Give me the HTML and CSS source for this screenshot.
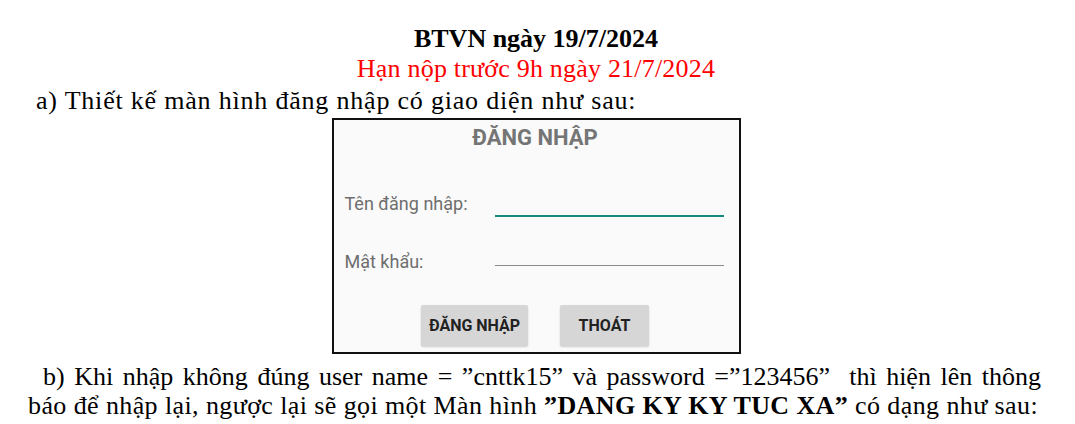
FILE: index.html
```html
<!DOCTYPE html>
<html lang="vi">
<head>
<meta charset="utf-8">
<title>BTVN</title>
<link rel="stylesheet" href="styles.css">
</head>
<body>
<div class="page">
  <div class="title">BTVN ngày 19/7/2024</div>
  <div class="deadline">Hạn nộp trước 9h ngày 21/7/2024</div>
  <div class="line-a">a) Thiết kế màn hình đăng nhập có giao diện như sau:</div>
  <div class="screen">
    <div class="screen-title">ĐĂNG NHẬP</div>
    <div class="row row-user">
      <div class="label">Tên đăng nhập:</div>
      <div class="field field-active"></div>
    </div>
    <div class="row row-pass">
      <div class="label">Mật khẩu:</div>
      <div class="field field-idle"></div>
    </div>
    <div class="buttons">
      <div class="btn btn-login">ĐĂNG NHẬP</div>
      <div class="btn btn-exit">THOÁT</div>
    </div>
  </div>
  <div class="line-b1">b) Khi nhập không đúng user name = ”cnttk15” và password =”123456”&nbsp; thì hiện lên thông</div>
  <div class="line-b2">báo để nhập lại, ngược lại sẽ gọi một Màn hình <b>”DANG KY KY TUC XA”</b> có dạng như sau:</div>
</div>
</body>
</html>
```
FILE: styles.css
```css
html, body {
  margin: 0;
  padding: 0;
  background: #ffffff;
}
.page {
  font-family: "Liberation Serif", "Times New Roman", serif;
  font-size: 26px;
  line-height: 30px;
  color: #000;
  padding: 24px 34px 0 28px;
  display: flex;
  flex-direction: column;
}
.title {
  text-align: center;
  font-weight: bold;
  margin-left: 3px;
}
.deadline {
  text-align: center;
  color: #ff0000;
  margin-left: 3px;
  letter-spacing: 0.2px;
}
.line-a {
  margin-top: 2px;
  padding-left: 8px;
  letter-spacing: 0.8px;
}
.screen {
  align-self: center;
  margin-left: 3px;
  margin-top: 2px;
  width: 409px;
  height: 236px;
  box-sizing: border-box;
  border: 2px solid #111;
  background: #fafafa;
  font-family: Roboto, "Noto Sans", sans-serif;
  line-height: normal;
  display: flex;
  flex-direction: column;
  padding: 5px 15px 0 11px;
}
.screen-title {
  text-align: center;
  font-size: 22px;
  line-height: 26px;
  font-weight: bold;
  color: #757575;
  margin-left: 2px;
}
.row {
  display: flex;
  align-items: flex-start;
}
.row-user {
  margin-top: 42px;
}
.row-pass {
  margin-top: 34px;
}
.label {
  width: 150px;
  font-size: 18px;
  line-height: 21px;
  color: #6e6e6e;
}
.field {
  flex: 1;
}
.field-active {
  height: 22px;
  border-bottom: 2px solid #16897c;
}
.field-idle {
  height: 14px;
  border-bottom: 1px solid #8c8c8c;
}
.buttons {
  margin-top: 33px;
  display: flex;
  justify-content: center;
  gap: 32px;
  margin-left: 2px;
}
.btn {
  height: 41px;
  display: flex;
  align-items: center;
  justify-content: center;
  background: #d6d6d6;
  border-radius: 2px;
  box-shadow: 0 1px 2px rgba(0, 0, 0, 0.18);
  font-size: 16px;
  font-weight: bold;
  color: #222;
}
.btn-login {
  width: 107px;
}
.btn-exit {
  width: 89px;
}
.line-b1 {
  margin-top: 8px;
  padding-left: 15px;
  text-align: justify;
  text-align-last: justify;
  white-space: nowrap;
}
.line-b2 {
  white-space: nowrap;
  line-height: 28px;
  letter-spacing: 0.4px;
}
```
